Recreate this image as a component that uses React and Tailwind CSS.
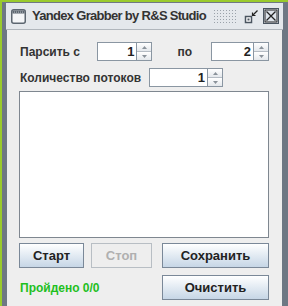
import React from "react";

const font = { fontFamily: '"Liberation Sans", Arial, sans-serif' };

function Spinner({ value, w }) {
  return (
    <div className={`flex h-[19px] ${w}`}>
      <div className="flex-1 bg-white border border-[#8a96a2] flex items-center justify-end pr-[2px] text-[13px] font-bold text-[#222] leading-none">
        {value}
      </div>
      <div className="w-[15px] flex flex-col border border-l-0 border-[#8a96a2]">
        <div className="flex-1 bg-gradient-to-b from-white to-[#e4e8ec] border-b border-[#b5bcc4] flex items-center justify-center">
          <svg width="5" height="3" viewBox="0 0 5 3"><path d="M0 3 L2.5 0 L5 3 Z" fill="#8a929a" /></svg>
        </div>
        <div className="flex-1 bg-gradient-to-b from-white to-[#e4e8ec] flex items-center justify-center">
          <svg width="5" height="3" viewBox="0 0 5 3"><path d="M0 0 L2.5 3 L5 0 Z" fill="#8a929a" /></svg>
        </div>
      </div>
    </div>
  );
}

function Btn({ children, w, disabled }) {
  return (
    <div
      className={`h-[25px] ${w} flex items-center justify-center text-[13px] font-bold border ${
        disabled
          ? "border-[#b8bec4] bg-[#eeeeee] text-[#b0b0b0]"
          : "border-[#7a8898] bg-gradient-to-b from-[#ffffff] to-[#c6d6e6] text-[#222]"
      }`}
    >
      {children}
    </div>
  );
}

export default function App() {
  return (
    <div className="w-[288px] h-[306px] bg-[#9acb2c] pt-[2px] pl-[2px] overflow-hidden" style={font}>
      <div className="w-[286px] h-[304px] bg-[#6e7884] flex flex-col pl-[5px] pr-[6px]">
        {/* title bar */}
        <div className="h-[27px] mt-[1px] -mx-[1px] bg-[#e4e8ec] border-b border-[#b0b6bc] flex items-center pl-[5px] pr-[3px] whitespace-nowrap">
          <svg width="15" height="15" viewBox="0 0 15 15" className="mr-[6px] shrink-0">
            <rect x="0.75" y="0.75" width="13.5" height="13.5" rx="2" fill="#f4f6f8" stroke="#5c6670" strokeWidth="1.5" />
            <rect x="1.5" y="1.5" width="12" height="3" fill="#5c6670" />
            <circle cx="3.5" cy="3" r="0.5" fill="#e0e4e8" />
            <circle cx="5.5" cy="3" r="0.5" fill="#e0e4e8" />
            <circle cx="7.5" cy="3" r="0.5" fill="#e0e4e8" />
            <circle cx="9.5" cy="3" r="0.5" fill="#e0e4e8" />
            <circle cx="11.5" cy="3" r="0.5" fill="#e0e4e8" />
          </svg>
          <span className="w-[176px] shrink-0 text-[13px] font-bold text-[#333] tracking-[-0.7px]">Yandex Grabber by R&amp;S Studio</span>
          <div className="ml-[5px] shrink-0 w-[25px] h-[15px] bg-[radial-gradient(#9aa2aa_0.7px,transparent_0.8px)] bg-[length:3px_3px]" />
          <svg width="15" height="15" viewBox="0 0 15 15" className="ml-[6px] shrink-0">
            <rect x="1.5" y="7.5" width="6" height="6" fill="#ffffff" stroke="#4a5560" strokeWidth="1.5" />
            <rect x="3.5" y="9.5" width="2" height="2" fill="#4a5560" />
            <path d="M13.5 1.5 L9 6" stroke="#222" strokeWidth="1.2" />
            <path d="M8.5 3.5 L8.5 6.5 L11.5 6.5" stroke="#222" strokeWidth="1.2" fill="none" />
          </svg>
          <svg width="16" height="16" viewBox="0 0 16 16" className="ml-[4px] shrink-0">
            <rect x="0.5" y="0.5" width="15" height="15" fill="#dde3ea" stroke="#4a5560" />
            <rect x="2" y="2" width="12" height="12" fill="none" stroke="#222" strokeWidth="1" />
            <path d="M3.5 3.5 L12.5 12.5 M12.5 3.5 L3.5 12.5" stroke="#222" strokeWidth="1.3" />
          </svg>
        </div>
        {/* content */}
        <div className="flex-1 bg-[#eeeeee] flex flex-col pl-[12px] pr-[13px] pt-[12px] text-[12px] font-bold text-[#333]">
          <div className="flex items-center h-[19px]">
            <span className="w-[78px] pl-[1px]">Парсить с</span>
            <Spinner value="1" w="w-[56px]" />
            <span className="ml-[25px] w-[34px]">по</span>
            <Spinner value="2" w="w-[58px]" />
          </div>
          <div className="flex items-center h-[19px] mt-[7px]">
            <span className="w-[130px] pl-[1px]">Количество потоков</span>
            <Spinner value="1" w="w-[74px]" />
          </div>
          <div className="mt-[4px] h-[147px] bg-white border border-[#7f8790]" />
          <div className="flex mt-[5px]">
            <Btn w="w-[65px]">Старт</Btn>
            <div className="ml-[7px]">
              <Btn w="w-[61px]" disabled>Стоп</Btn>
            </div>
            <div className="ml-[10px]">
              <Btn w="w-[107px]">Сохранить</Btn>
            </div>
          </div>
          <div className="flex items-center mt-[7px]">
            <span className="w-[143px] pl-[1px] text-[#1fbf1f]">Пройдено 0/0</span>
            <Btn w="w-[107px]">Очистить</Btn>
          </div>
        </div>
      </div>
    </div>
  );
}
